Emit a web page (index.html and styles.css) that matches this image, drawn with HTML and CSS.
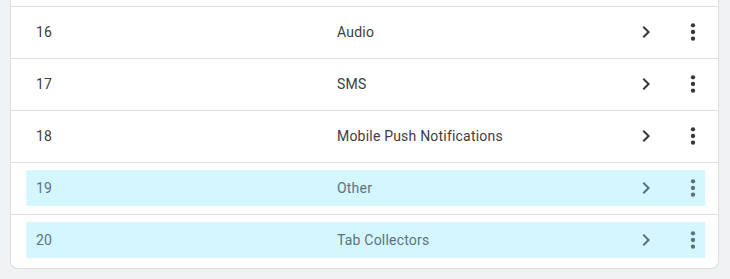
FILE: index.html
```html
<!DOCTYPE html>
<html>
<head>
<meta charset="utf-8">
<link rel="stylesheet" href="styles.css">
</head>
<body>
<div class="card">
  <div class="row">
    <div class="item">
      <span class="num">16</span>
      <span class="name">Audio</span>
      <svg class="icon chev" viewBox="0 0 24 24"><path d="M10 6L8.59 7.41 13.17 12l-4.58 4.59L10 18l6-6z"/></svg>
      <svg class="icon kebab" viewBox="0 0 24 24"><circle cx="12" cy="5.3" r="2.15"/><circle cx="12" cy="12" r="2.15"/><circle cx="12" cy="18.7" r="2.15"/></svg>
    </div>
  </div>
  <div class="row">
    <div class="item">
      <span class="num">17</span>
      <span class="name">SMS</span>
      <svg class="icon chev" viewBox="0 0 24 24"><path d="M10 6L8.59 7.41 13.17 12l-4.58 4.59L10 18l6-6z"/></svg>
      <svg class="icon kebab" viewBox="0 0 24 24"><circle cx="12" cy="5.3" r="2.15"/><circle cx="12" cy="12" r="2.15"/><circle cx="12" cy="18.7" r="2.15"/></svg>
    </div>
  </div>
  <div class="row">
    <div class="item">
      <span class="num">18</span>
      <span class="name">Mobile Push Notifications</span>
      <svg class="icon chev" viewBox="0 0 24 24"><path d="M10 6L8.59 7.41 13.17 12l-4.58 4.59L10 18l6-6z"/></svg>
      <svg class="icon kebab" viewBox="0 0 24 24"><circle cx="12" cy="5.3" r="2.15"/><circle cx="12" cy="12" r="2.15"/><circle cx="12" cy="18.7" r="2.15"/></svg>
    </div>
  </div>
  <div class="row">
    <div class="item highlight">
      <span class="num">19</span>
      <span class="name">Other</span>
      <svg class="icon chev" viewBox="0 0 24 24"><path d="M10 6L8.59 7.41 13.17 12l-4.58 4.59L10 18l6-6z"/></svg>
      <svg class="icon kebab" viewBox="0 0 24 24"><circle cx="12" cy="5.3" r="2.15"/><circle cx="12" cy="12" r="2.15"/><circle cx="12" cy="18.7" r="2.15"/></svg>
    </div>
  </div>
  <div class="row">
    <div class="item highlight">
      <span class="num">20</span>
      <span class="name">Tab Collectors</span>
      <svg class="icon chev" viewBox="0 0 24 24"><path d="M10 6L8.59 7.41 13.17 12l-4.58 4.59L10 18l6-6z"/></svg>
      <svg class="icon kebab" viewBox="0 0 24 24"><circle cx="12" cy="5.3" r="2.15"/><circle cx="12" cy="12" r="2.15"/><circle cx="12" cy="18.7" r="2.15"/></svg>
    </div>
  </div>
</div>
</body>
</html>
```

FILE: styles.css
```css
html, body {
  margin: 0;
  padding: 0;
  background: #f1f2f4;
}
body {
  padding: 0 11px 0 10px;
  font-family: Roboto, "Liberation Sans", sans-serif;
  font-size: 14px;
  letter-spacing: 0.2px;
  color: #3d3d3d;
}
.card {
  background: #ffffff;
  border: 1px solid #dcdde1;
  border-top: none;
  border-radius: 0 0 8px 8px;
  padding: 6px 0 2px 0;
}
.row {
  border-top: 1px solid #dddddd;
  padding: 7px 13px 8px 15px;
}
.item {
  height: 36px;
  display: flex;
  align-items: center;
  padding-left: 10px;
}
.item.highlight {
  background: #d4f6fd;
  color: #5b7280;
}
.num {
  width: 301px;
  flex: none;
}
.name {
  flex: 1;
}
.icon {
  width: 24px;
  height: 24px;
  flex: none;
  fill: #363636;
}
.highlight .icon {
  fill: #58707c;
}
.chev {
  margin-right: 23px;
}
```
